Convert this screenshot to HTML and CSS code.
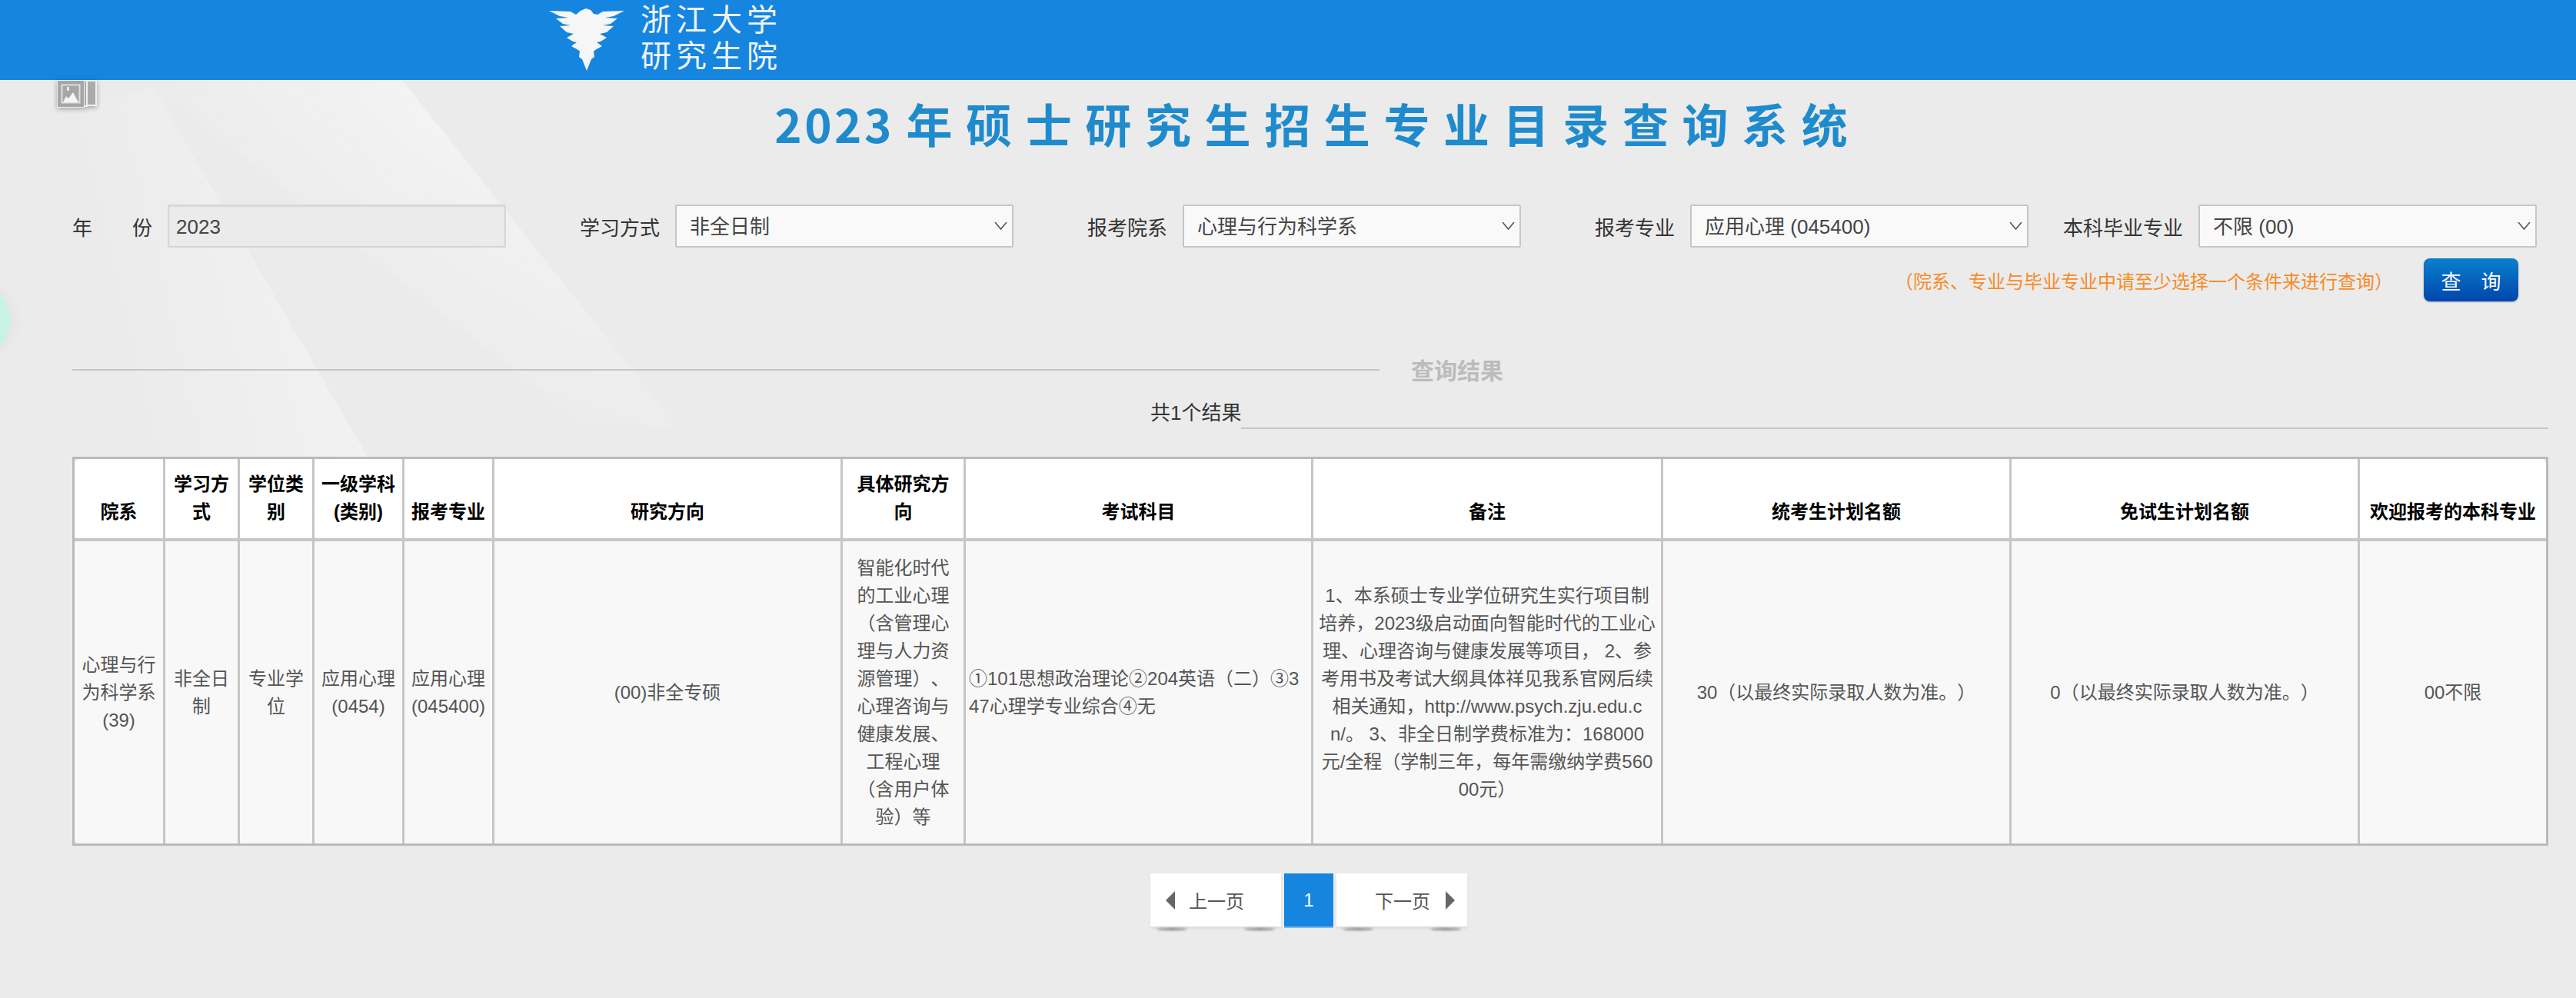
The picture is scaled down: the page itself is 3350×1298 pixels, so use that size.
FILE: index.html
```html
<!DOCTYPE html>
<html lang="zh">
<head>
<meta charset="utf-8">
<title>2023年硕士研究生招生专业目录查询系统</title>
<link rel="stylesheet" href="styles.css">
</head>
<body>
<svg class="rays" viewBox="0 0 1000 600" aria-hidden="true">
  <defs>
    <linearGradient id="rayA" gradientUnits="userSpaceOnUse" x1="140" y1="300" x2="440" y2="230">
      <stop offset="0" stop-color="#fff" stop-opacity="0"/>
      <stop offset="1" stop-color="#fff" stop-opacity=".36"/>
    </linearGradient>
    <linearGradient id="rayB" gradientUnits="userSpaceOnUse" x1="280" y1="190" x2="520" y2="10">
      <stop offset="0" stop-color="#fff" stop-opacity="0"/>
      <stop offset="1" stop-color="#fff" stop-opacity=".4"/>
    </linearGradient>
    <linearGradient id="rayC" gradientUnits="userSpaceOnUse" x1="0" y1="60" x2="0" y2="470">
      <stop offset="0" stop-color="#fff"/>
      <stop offset=".6" stop-color="#888"/>
      <stop offset="1" stop-color="#333"/>
    </linearGradient>
    <mask id="fade" maskUnits="userSpaceOnUse" x="0" y="0" width="1000" height="600">
      <rect width="1000" height="600" fill="url(#rayC)"/>
    </mask>
  </defs>
  <polygon points="95,40 200,10 478,490 380,490 130,490" fill="url(#rayA)"/>
  <polygon points="191,0 523,0 880,450 760,450" fill="url(#rayB)" mask="url(#fade)"/>
</svg>
<div class="blob"></div>
<header class="topbar">
  <div class="brand">
    <svg class="emblem" viewBox="0 -2 98 82" aria-hidden="true">
      <path fill="#f6f6f6" d="M0 2 28 3 35 7 41 2 48 -1 54 1 58 6 63 7 70 3 98 2 84 9 73 11 89 12 80 19 70 21 84 22 75 30 66 32 75 37 67 42 62 43 69 48 60 53 58 55 59 62 55 65 49 80 43 65 39 62 40 55 38 53 29 48 36 43 31 42 23 37 32 32 23 30 14 22 28 21 18 19 9 12 25 11 14 9Z"/>
    </svg>
    <div class="brand-name"><span>浙江大学</span><span>研究生院</span></div>
  </div>
</header>
<svg class="broken" viewBox="0 0 52 36" aria-hidden="true">
  <rect x="38" y="0" width="14" height="34" fill="#f0f0f0"/><rect x="40" y="2" width="10" height="30" fill="#ababab"/>
  <rect x="30" y="0" width="10" height="35" fill="#f0f0f0"/><rect x="32" y="2" width="6" height="31" fill="#ababab"/>
  <rect x="0" y="0" width="36" height="36" fill="#f0f0f0"/><rect x="1" y="1" width="34" height="34" fill="#a6a6a6"/>
  <rect x="6.5" y="6.5" width="23" height="23" fill="none" stroke="#dedede" stroke-width="2"/>
  <path fill="#f4f4f4" d="M8 29 12 21 15 24 21 16 28 29Z"/><rect x="13" y="9" width="3" height="5" fill="#e8e8e8"/>
</svg>
<main class="page">
  <h1 class="title"><span class="title-year">2023</span> 年 硕 士 研 究 生 招 生 专 业 目 录 查 询 系 统</h1>
  <form class="filters">
    <label class="field field-year"><span class="field-label label-spread"><i>年</i><i>份</i></span><input class="control control-readonly" value="2023" readonly></label>
    <label class="field"><span class="field-label">学习方式</span><select class="control"><option>非全日制</option></select></label>
    <label class="field"><span class="field-label">报考院系</span><select class="control"><option>心理与行为科学系</option></select></label>
    <label class="field"><span class="field-label">报考专业</span><select class="control"><option>应用心理 (045400)</option></select></label>
    <label class="field"><span class="field-label">本科毕业专业</span><select class="control"><option>不限 (00)</option></select></label>
  </form>
  <div class="query-row">
    <span class="hint">（院系、专业与毕业专业中请至少选择一个条件来进行查询）</span>
    <button class="query-btn" type="button">查 询</button>
  </div>
  <div class="section-head"><span class="rule"></span><span class="section-name">查询结果</span></div>
  <div class="count-row"><span class="count">共1个结果</span><span class="rule"></span></div>
  <div class="table-frame">
  <table class="results">
    <colgroup>
      <col class="c1"><col class="c2"><col class="c3"><col class="c4"><col class="c5"><col class="c6"><col class="c7"><col class="c8"><col class="c9"><col class="c10"><col class="c11"><col class="c12">
    </colgroup>
    <thead>
      <tr><th>院系</th><th>学习方式</th><th>学位类别</th><th>一级学科(类别)</th><th>报考专业</th><th>研究方向</th><th>具体研究方向</th><th>考试科目</th><th>备注</th><th>统考生计划名额</th><th>免试生计划名额</th><th>欢迎报考的本科专业</th></tr>
    </thead>
    <tbody>
      <tr>
        <td>心理与行为科学系(39)</td>
        <td>非全日制</td>
        <td>专业学位</td>
        <td>应用心理(0454)</td>
        <td>应用心理(045400)</td>
        <td>(00)非全专硕</td>
        <td class="lines">智能化时代<br>的工业心理<br>（含管理心<br>理与人力资<br>源管理）、<br>心理咨询与<br>健康发展、<br>工程心理<br>（含用户体<br>验）等</td>
        <td class="left">①101思想政治理论②204英语（二）③347心理学专业综合④无</td>
        <td class="lines">1、本系硕士专业学位研究生实行项目制<br>培养，2023级启动面向智能时代的工业心<br>理、心理咨询与健康发展等项目， 2、参<br>考用书及考试大纲具体祥见我系官网后续<br>相关通知，http://www.psych.zju.edu.c<br>n/。 3、非全日制学费标准为：168000<br>元/全程（学制三年，每年需缴纳学费560<br>00元）</td>
        <td>30（以最终实际录取人数为准。）</td>
        <td>0（以最终实际录取人数为准。）</td>
        <td>00不限</td>
      </tr>
    </tbody>
  </table>
  </div>
  <nav class="pager">
    <a class="page-link prev"><span class="arrow arrow-left"></span>上一页</a>
    <a class="page-num">1</a>
    <a class="page-link next">下一页<span class="arrow arrow-right"></span></a>
  </nav>
</main>
</body>
</html>
```
FILE: styles.css
```css
* { box-sizing: border-box; }
html, body { margin: 0; padding: 0; }
body {
  position: relative;
  width: 3350px;
  height: 1298px;
  overflow: hidden;
  background: #ebebeb;
  color: #333;
  font-family: "Liberation Sans", "Noto Sans CJK SC", sans-serif;
  font-size: 24px;
  text-spacing-trim: space-all;
}
.rays { position: absolute; left: 0; top: 104px; width: 1000px; height: 600px; }
.blob { position: absolute; left: -80px; top: 370px; width: 94px; height: 94px; border-radius: 50%; background: #c8f3e3; box-shadow: 0 0 24px rgba(0,0,0,.05); }
.topbar { position: relative; height: 104px; background: #1585e0; }
.brand { position: absolute; left: 714px; top: 3px; display: flex; gap: 21px; }
.emblem { width: 98px; height: 82px; margin-top: 7px; }
.brand-name { display: flex; flex-direction: column; color: #eef3f8; font-family: "Liberation Sans", "Noto Sans CJK SC", sans-serif; font-size: 40px; line-height: 47px; font-weight: 400; }
.brand-name span { display: block; height: 47px; letter-spacing: 6px; }
.broken { position: absolute; left: 74px; top: 104px; width: 52px; height: 36px; filter: drop-shadow(0 2px 3px rgba(0,0,0,.3)); }
.page { position: relative; padding: 0 36px 0 94px; }
.title { margin: 20px 0 0; padding-left: 4px; height: 72px; text-align: center; color: #1f8bcc; font-family: "Noto Sans CJK SC", sans-serif; font-size: 60px; line-height: 72px; font-weight: 700; letter-spacing: 2px; white-space: nowrap; }
.title-year { letter-spacing: 3.5px; }
.filters { display: flex; margin-top: 70px; height: 56px; }
.field { display: flex; align-items: center; gap: 20px; margin-left: 96px; }
.field:first-child { margin-left: 0; }
.field:last-child { margin-left: 45px; }
.field-label { font-size: 26px; color: #333; white-space: nowrap; }
.label-spread { display: flex; justify-content: space-between; width: 104px; }
.label-spread i { font-style: normal; }
.control { width: 440px; height: 56px; padding: 2px 40px 0 17px; border: 2px solid #c6c6c6; background: #f9f9f9 no-repeat right 6px center; font: 26px "Liberation Sans", "Noto Sans CJK SC", sans-serif; color: #444; appearance: none; border-radius: 2px; outline: 0; background-image: url("data:image/svg+xml,%3Csvg xmlns='http://www.w3.org/2000/svg' width='17' height='10'%3E%3Cpath d='M1 0 8.5 9 16 0' fill='none' stroke='%23555' stroke-width='1.6'/%3E%3C/svg%3E"); }
.control-readonly { background: #ebebeb; border-color: #d6d6d6; padding-left: 9px; box-shadow: inset 0 1px 2px rgba(0,0,0,.08); }
.query-row { display: flex; justify-content: flex-end; align-items: center; gap: 40px; margin-top: 14px; padding-right: 39px; height: 56px; }
.hint { color: #f68c28; font-size: 24px; white-space: nowrap; }
.query-btn { width: 123px; height: 56px; border: 0; border-radius: 8px; background: linear-gradient(#0a80cc, #0046ac); color: #fff; font: 26px "Noto Sans CJK SC", sans-serif; word-spacing: 20px; box-shadow: 0 1px 2px rgba(0,0,0,.3); }
.section-head { display: flex; align-items: center; gap: 41px; margin-top: 67px; height: 44px; }
.section-head .rule { width: 1700px; }
.rule { display: block; height: 2px; background: #c6c6c6; }
.section-name { margin-top: -3px; color: #bcbcbc; font-size: 30px; font-weight: 700; }
.count-row { display: flex; align-items: flex-end; margin-top: 16px; padding-left: 1402px; height: 36px; }
.count-row .rule { flex: 1; margin-bottom: -3px; }
.count { font-size: 26px; line-height: 36px; }
.table-frame { margin-top: 39px; width: 3220px; border: 3px solid #bababa; }
.results { table-layout: fixed; width: 100%; border-collapse: separate; border-spacing: 0; }
.c1 { width: 118px; } .c2 { width: 97px; } .c3 { width: 97px; } .c4 { width: 117px; } .c5 { width: 117px; } .c6 { width: 453px; } .c7 { width: 160px; } .c8 { width: 452px; } .c9 { width: 455px; } .c10 { width: 453px; } .c11 { width: 453px; } .c12 { width: 242px; }
.results th, .results td { padding: 8px; border-right: 3px solid #c6c6c6; text-align: center; vertical-align: middle; line-height: 36px; font-size: 24px; word-break: break-all; overflow-wrap: anywhere; }
.results th:last-child, .results td:last-child { border-right: 0; }
.results th { height: 107px; padding-top: 0; padding-bottom: 16px; background: #fff; color: #000; font-weight: 700; vertical-align: bottom; border-bottom: 4px solid #c6c6c6; }
.results th:first-child { border-top-left-radius: 7px; }
.results th:last-child { border-top-right-radius: 7px; }
.results td { height: 393px; background: #f8f8f8; color: #555; }
.results td:first-child { border-bottom-left-radius: 7px; }
.results td.left { text-align: left; padding-left: 4px; padding-right: 4px; }
.results td.lines { padding-left: 0; padding-right: 0; white-space: nowrap; }
.pager { display: flex; gap: 4px; margin: 36px 0 0 1402px; }
.pager a { display: flex; align-items: center; height: 69px; font-size: 24px; color: #555; }
.page-link { position: relative; width: 170px; background: #fff; box-shadow: 0 3px 2px #dedede; }
.page-link::before, .page-link::after { content: ""; position: absolute; bottom: -5px; width: 40px; height: 3px; border-radius: 50%; background: #808080; filter: blur(1.5px); }
.page-link::before { left: 8px; }
.page-link::after { right: 8px; }
.prev { padding-left: 20px; gap: 18px; }
.next { padding-right: 16px; gap: 20px; justify-content: flex-end; }
.pager .page-num { width: 64px; justify-content: center; background: #1585e0; color: #fff; box-shadow: 0 2px 0 #7fb8e8; }
.arrow { display: block; width: 0; height: 0; border-top: 12px solid transparent; border-bottom: 12px solid transparent; }
.arrow-left { border-right: 12px solid #666; }
.arrow-right { border-left: 12px solid #666; }
```
